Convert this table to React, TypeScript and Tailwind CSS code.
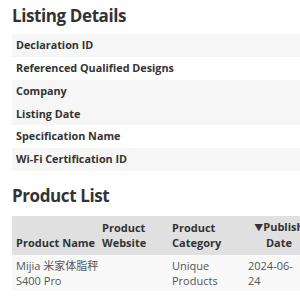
import React from "react";

const rows: { label: string; gray: boolean }[] = [
  { label: "Declaration ID", gray: true },
  { label: "Referenced Qualified Designs", gray: false },
  { label: "Company", gray: true },
  { label: "Listing Date", gray: true },
  { label: "Specification Name", gray: false },
  { label: "Wi-Fi Certification ID", gray: true },
];

export default function App() {
  return (
    <div
      className="w-[300px] h-[300px] overflow-hidden bg-white text-[#333]"
      style={{ fontFamily: '"Open Sans", "Noto Sans CJK SC", sans-serif' }}
    >
      <div className="pl-[12px] w-[340px]">
        <h2 className="text-[17px] tracking-[-0.4px] font-bold leading-[22px] pt-[5px] pb-[7px] text-[#333]">Listing Details</h2>
        <div className="flex flex-col">
          {rows.map((r) => (
            <div
              key={r.label}
              className={`h-[22.8px] flex items-center pl-[4px] text-[10.8px] font-bold ${r.gray ? "bg-[#f6f6f6]" : "bg-white"}`}
            >
              {r.label}
            </div>
          ))}
        </div>
        <h2 className="text-[17px] tracking-[-0.4px] font-bold leading-[22px] pt-[14px] pb-[9px] text-[#333]">Product List</h2>
        <div className="flex flex-col w-[330px]">
          <div className="flex bg-[#e0e0e0] h-[39px] items-end pb-[5px] text-[11px] font-bold leading-[15px] text-[#333]">
            <div className="w-[86px] pl-[4px] whitespace-nowrap">Product Name</div>
            <div className="w-[70px] pl-[4px]">
              Product
              <br />
              Website
            </div>
            <div className="w-[76px] pl-[4px]">
              Product
              <br />
              Category
            </div>
            <div className="w-[70px] text-center">
              <span className="text-[9px]">▼</span>Publish
              <br />
              Date
            </div>
          </div>
          <div className="flex bg-[#f9f9f9] h-[36px] pt-[3px] text-[11px] leading-[15px] text-[#555]">
            <div className="w-[86px] pl-[4px] whitespace-nowrap">
              Mijia 米家体脂秤
              <br />
              S400 Pro
            </div>
            <div className="w-[70px] pl-[4px]"></div>
            <div className="w-[76px] pl-[4px]">
              Unique
              <br />
              Products
            </div>
            <div className="w-[70px] pl-[4px]">
              2024-06-
              <br />
              24
            </div>
          </div>
        </div>
      </div>
    </div>
  );
}
